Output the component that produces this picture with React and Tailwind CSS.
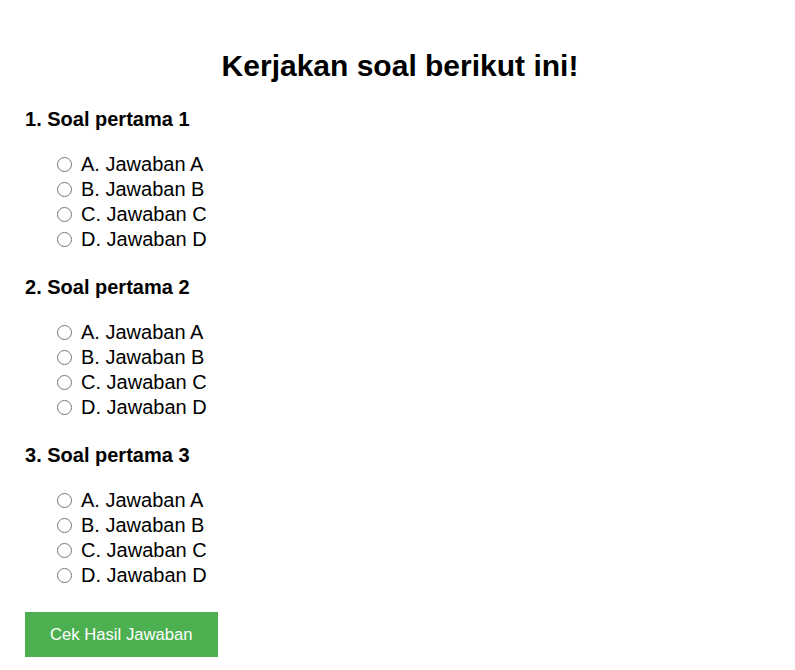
export default function App() {
  const questions = [1, 2, 3];
  const opts = ["A", "B", "C", "D"];
  return (
    <div className="min-h-screen bg-white px-[25px] font-['Liberation_Sans',Arial,sans-serif] text-black">
      <h1 className="pl-[5px] pt-[48px] text-center text-[30px] font-bold leading-[36px]">
        Kerjakan soal berikut ini!
      </h1>
      <div className="mt-[23px] flex flex-col gap-[23px]">
        {questions.map((q) => (
          <div key={q}>
            <h3 className="text-[20px] font-bold leading-[24px]">
              {q}. Soal pertama {q}
            </h3>
            <div className="mt-[21px] flex flex-col pl-[32px]">
              {opts.map((o) => (
                <label key={o} className="flex items-center text-[20px] leading-[25px]">
                  <input type="radio" name={`q${q}`} className="m-0 mr-[9px] h-[15px] w-[15px]" />
                  <span>
                    {o}. Jawaban {o}
                  </span>
                </label>
              ))}
            </div>
          </div>
        ))}
      </div>
      <button className="mt-[24px] bg-[#4CAF50] px-[25px] text-[16.67px] leading-[45px] text-white">
        Cek Hasil Jawaban
      </button>
    </div>
  );
}
